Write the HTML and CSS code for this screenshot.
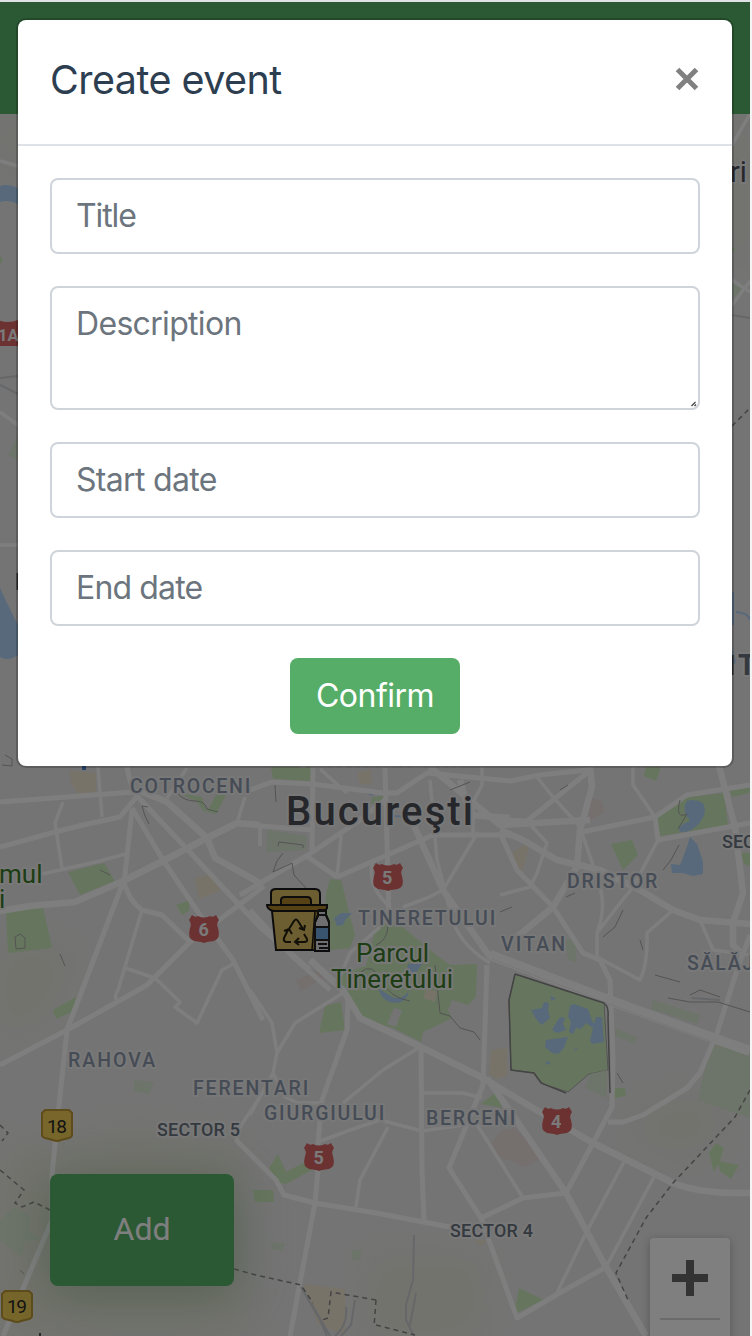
FILE: index.html
```html
<!DOCTYPE html>
<html lang="en">
<head>
<meta charset="utf-8">
<title>Create event</title>
<link rel="stylesheet" href="styles.css">
</head>
<body>
<div class="app">
  <header class="topbar"></header>
  <main class="map">
    <svg class="map-canvas" viewBox="0 114 750 1222" width="750" height="1222" aria-label="Map of Bucureşti">
      <defs>
        <filter id="soft" x="-30%" y="-30%" width="160%" height="160%"><feGaussianBlur stdDeviation="16"/></filter>
        <path id="shield" d="M-12-14 Q-9-11-6-13 Q0-10 6-13 Q9-11 12-14 L15-9 Q12-5 14-1 Q17 10 10 12 L3 13 L0 14 L-3 13 L-10 12 Q-17 10-14-1 Q-12-5-15-9Z"/>
        <path id="badge" d="M-12-15 H12 L15-12 V10 Q15 12 12 13 L4 15 Q0 17-4 15 L-12 13 Q-15 12-15 10 V-12Z"/>
      </defs>
      <rect class="land" y="114" width="750" height="1222"/>
      <g class="tint" filter="url(#soft)">
        <path d="M0 114H20V170H0zM730 114H750V260H730zM0 950H70L50 1010L0 1040zM0 1150H60L130 1130L240 1150L250 1336H0zM370 1260H480V1336H370zM640 1110L710 1100L720 1140L650 1150z"/>
      </g>
      <g class="park">
        <path d="M271 767H312V781L273 779zM68 872L104 863L115 881L80 895zM6 912L43 907L52 948L8 953zM176 905L190 900L189 911L182 915zM53 1010L78 996L74 1011L56 1019zM178 793L202 797L207 812L216 795L226 795L216 814L204 811L196 801z"/>
        <path d="M330 879L341 880L355 935L350 948L323 951L326 893zM372 797L384 796L382 805L371 804z"/>
        <path fill-rule="evenodd" d="M375 930L386 921L400 925L440 958L450 965L477 964L476 997L468 1005L452 1000L448 1010L452 1018L440 1024L423 1032L421 1042L393 1028L355 1017L337 980L343 973L366 966zM394 1008L402 1010L396 1027L387 1024z"/>
        <path d="M325 1006L341 1002L345 1030L319 1033z"/>
        <path class="edge" d="M515 974L604 1003L608 1070L589 1074L568 1092L543 1084L534 1073L511 1070L509 1000z"/>
        <path d="M656 817L687 797L724 793L728 825L660 836zM730 791L750 787V793L732 797zM611 844L632 840L638 855L623 870zM646 767H661L656 781L644 776zM741 853H750V866L744 864z"/>
        <path d="M514 1314L519 1288L544 1300zM709 1153L716 1143L724 1148L719 1163L714 1172zM718 1161L739 1165L731 1179L720 1171zM615 1088H625L626 1096L614 1098zM481 1104L496 1092L502 1108z"/>
        <path d="M269 1168L278 1154L286 1172L309 1160L312 1170L286 1184L275 1182zM253 1190H273L274 1202L255 1202z"/>
        <path d="M0 256L3 260L0 264zM731 246L736 250L731 252z"/>
      </g>
      <g class="park pale">
        <path d="M715 1040L750 1052V1118L698 1100L705 1068zM590 1074L607 1070V1098L585 1088zM0 1220L14 1207L30 1215L29 1230L42 1240L25 1241L22 1258L0 1240zM134 1080L154 1082L149 1094L134 1091zM565 940L576 938L576 962L568 960zM352 1250H361V1260H352zM272 1242L286 1244L281 1251L271 1249zM268 830L306 836L306 850L266 852z"/>
        <path d="M734 282L748 286L732 298zM8 455L18 435V460zM653 1000L700 1015L697 1024L651 1009zM615 1028L637 1037L635 1044L615 1036z"/>
      </g>
      <g class="built">
        <path d="M70 770L96 773V792L78 794L71 783zM195 878L212 874L220 891L199 899zM357 773L371 769L372 785L360 784zM513 852L531 841L522 872L511 865zM491 1050L507 1048V1075L498 1079L489 1075zM426 990L437 991L435 1002L423 998z"/>
        <path d="M473 1241L487 1240L481 1246zM303 1284L345 1289V1336L318 1324z"/>
      </g>
      <g class="rose"><path d="M592 798L602 802L604 812L587 822zM502 1130L514 1128L535 1146L539 1160L525 1167L509 1160L494 1155L492 1142zM296 980L320 970L324 977L301 991z"/></g>

      <g class="water">
        <path d="M687 801Q694 798 703 803Q708 813 700 822Q693 832 681 832Q676 830 683 824L690 821Q681 810 687 801zM690 837L697 844L703 862V874L693 876L683 873H672L671 864L680 865Q687 848 690 837z"/>
        <path d="M531 1010L542 1008L544 1002L549 1003L548 1010L550 1018L542 1025L536 1019zM570 1006L574 1004L588 1009L591 1018L594 1024L596 1017L602 1017L604 1042L592 1044L590 1040L593 1028L586 1023L581 1029L576 1028L573 1034L569 1032L571 1022L568 1016zM552 1030L560 1017L565 1018L563 1024L566 1030L557 1033zM546 1040L568 1037L564 1048L558 1054L552 1053L545 1047zM550 996L556 998L552 1001zM574 1049L578 1048L575 1051z"/>
        <path d="M408 964L423 963L415 974L406 978zM378 988L392 997Q403 1001 410 989L407 981Q413 995 401 1002Q384 1006 378 988zM334 918L341 913L352 913L346 919L343 925L337 926zM546 1061L551 1063L546 1065z"/>
        <path d="M0 186Q8 183 18 188V204Q9 199 0 202zM0 588Q10 610 18 625V655Q8 662 0 657zM732 592H734V625H732zM732 648L736 662L732 667z"/>
      </g>
      <path class="canal" d="M393 816L411 817M366 792L373 795M500 955L512 961M736 612Q749 613 750 620"/>

      <g class="road thin">
        <path d="M63 802L55 823L62 868M42 874L100 861L125 854M142 910L118 990Q113 998 118 1001M125 968L155 978L180 1002L175 1007L197 1023L222 970L235 963M98 767L102 817M245 797L237 823M167 798L187 768M260 828L260 846"/>
        <path d="M308 857L337 877L341 837L339 832M373 860Q366 885 388 905M430 780L437 860L450 910Q456 943 490 963M478 832L443 890L427 898L403 907M473 802V835M380 927L350 953L340 977M320 769L347 793M527 821L547 843L537 873L530 887L500 895M655 817L633 785V767M473 802L482 785V767"/>
        <path d="M537 777L553 797L580 827L597 877Q608 905 597 933V957M658 840L633 887L617 907L597 933M673 910L647 933Q648 964 640 980L597 957M700 920L713 950L750 955M420 1047L383 1070L343 1103M422 1093H463L482 1098M250 990L272 1023L277 1053L273 1073L250 1115M273 1073L285 1097L298 1103H320M343 993L295 1023L277 1053M318 1142L350 1130L380 1120L422 1131L477 1123M388 1127L360 1180L356 1207"/>
        <path d="M476 1123L523 1198M624 1162L586 1233L556 1295M654 1177L606 1267M260 1097L240 1127L236 1141M0 161L18 166M0 325L18 333M0 412L18 425M732 145L750 114M732 280L750 292M732 305L750 281M0 545H18"/>
      </g>
      <g class="road">
        <path d="M0 802L133 792M0 847L55 832L83 825L120 817L138 795M132 810L124 883Q130 902 142 910L162 915L190 942L170 962M122 885L67 1030L58 1115L52 1175V1220L3 1336M0 1065L67 1030L117 1002L147 985L190 942L264 886M127 767Q131 790 138 797L260 927L310 970M132 808L163 860L200 915L233 960L263 1020"/>
        <path d="M250 790L272 782L312 784L383 793H397L427 773L510 781L540 775L587 770M260 826L313 830M313 767L312 850M385 767L387 843L389 918M240 895L308 855L357 822L385 800M337 877L433 835L510 835L523 840L557 860L600 870L640 890M308 857L337 877M250 910L293 957L330 990"/>
        <path d="M500 820L527 821L588 772M582 832L655 817L687 795L750 785M658 840L750 823M655 817L658 840M500 833L517 870L553 907L583 953L600 960L610 980L613 1060L612 1107L593 1143L566 1193L523 1198L481 1218L449 1168L483 1085L487 965"/>
        <path d="M750 935L737 970L717 1033L700 1073L687 1088L643 1115L623 1122H608M348 997L347 1030L322 1100L318 1143L318 1170L315 1203L290 1336M421 1045L422 1170L424 1220M236 1140L276 1180L284 1195L315 1203L376 1213L450 1227M481 1218L517 1318L556 1295L606 1267"/>
      </g>
      <g class="road wide">
        <path d="M0 911L30 906L75 902L123 881L163 861L207 838L237 823L260 825M138 790L167 802L207 838L215 858L260 883M410 817L443 890L490 957M590 767L592 787L580 830L577 867L553 907L517 937M500 830L523 840L557 860L600 870L640 890L673 910L700 920L750 924M718 762L735 827L743 893L733 923V945L740 952"/>
        <path d="M310 960L343 990L360 1018L417 1045L483 1078L533 1108L593 1143L673 1183Q700 1194 751 1193M487 1078L523 1130L566 1193L606 1267L646 1336M430 767L500 825L590 820M460 780L470 815L510 818"/>
      </g>
      <path class="road major" d="M490 955L603 998L713 1038L750 1051"/>
      <path class="road-line" d="M492 959L604 1002L712 1042"/>

      <g class="contour">
        <path d="M178 794Q185 801 195 801T207 809L218 812M142 806L145 816L149 824M142 806L148 807M275 785L276 802M278 846L279 842L303 845V848M283 853L277 861L273 872L292 863L294 875L306 888M680 800Q675 820 687 814L678 829M679 845L671 860L663 870M512 907L500 912M603 937L615 927L623 910M566 897L575 893M388 925Q388 940 376 945M361 972Q372 962 381 980T410 1001M435 965L440 1013L450 1016L460 1028L474 1032L480 1040M617 1073L623 1083M5 755L12 759V766L2 765"/>
        <path d="M20 1270L24 1274M100 870L110 875M60 954L65 966M450 790L470 782M560 790L568 785M640 940L643 950M655 975L680 982M690 995L700 990L720 997M668 998L690 1002L718 1002L750 1012M15 937L20 934L25 938V948L16 949z"/>
        <path class="fence" d="M515 974L604 1003Q609 1007 608 1017L610 1093M515 974L509 1000L511 1070L534 1073L541 1083L566 1093"/>
      </g>
      <path class="rail" d="M301 1287L320 1320L327 1336M311 1303L330 1336M346 1307Q348 1325 335 1336M355 1300L351 1325L341 1336M414 1235L413 1280L406 1305V1320L414 1336M416 1293L410 1325M0 378L18 376M732 315L750 318M0 385L18 394M692 998L720 1000"/>
      <path class="border" d="M0 1170L24 1190L15 1203L22 1207L34 1202L50 1210M234 1269L256 1275L301 1285L313 1303M376 1300L331 1292L328 1318L322 1320M376 1300L374 1327M376 1325L415 1335M750 1090L735 1117L673 1183L646 1218L616 1273L628 1300M732 426L750 408M0 1125L8 1133L2 1141"/>

      <g class="roadsign red">
        <use href="#shield" x="388" y="877"/><use href="#shield" x="204" y="929"/><use href="#shield" x="319" y="1157"/><use href="#shield" x="557" y="1121"/>
        <path d="M-2 320Q8 324 18 320V346H-2z"/>
      </g>
      <g class="roadsign yellow"><use href="#badge" x="57" y="1125"/><use href="#badge" x="17" y="1306"/></g>
      <g class="sign-text"><text x="382" y="884">5</text><text x="198.500" y="936">6</text><text x="313.500" y="1164">5</text><text x="551" y="1128">4</text><text x="-2" y="341" class="sign-small">1A</text></g>
      <g class="badge-text"><text x="47" y="1133" textLength="20">18</text><text x="7" y="1313" textLength="20">19</text></g>

      <g class="label area">
        <text x="130" y="793" textLength="122">COTROCENI</text><text x="296" y="766" textLength="166">CENTRUL VECHI</text>
        <text x="358" y="925" textLength="139">TINERETULUI</text><text x="501" y="951" textLength="66">VITAN</text>
        <text x="567" y="888" textLength="92">DRISTOR</text><text x="687" y="970">SĂLĂJAN</text>
        <text x="68" y="1067" textLength="89">RAHOVA</text><text x="193" y="1095" textLength="117">FERENTARI</text>
        <text x="264" y="1120" textLength="122">GIURGIULUI</text><text x="426" y="1125" textLength="91">BERCENI</text>
      </g>
      <g class="label sector">
        <text x="157" y="1136" textLength="83">SECTOR 5</text><text x="450" y="1237" textLength="83">SECTOR 4</text><text x="722" y="848">SECTOR 3</text>
      </g>
      <g class="label green">
        <text x="-1" y="883">mul</text><text x="-1" y="908">i</text>
        <text x="356" y="962" textLength="73">Parcul</text><text x="331" y="988" textLength="122">Tineretului</text>
      </g>
      <text class="label city" x="286" y="825" textLength="187">Bucureşti</text>
      <text class="label town" x="730" y="182">ri</text>
      <text class="label bold" x="738" y="675">T</text>
      <path class="tick" d="M732.500 655V675M17.500 573V590M40 1333V1336"/><path class="pin" d="M84 765V770"/>

      <g class="bin" transform="translate(266 888)">
        <path class="lid" d="M5 17V5Q5 1 10 1H49Q54 1 54 6V17z"/>
        <path class="lid dark" d="M15 17V12Q15 9 19 9H41Q45 9 45 13V17z"/>
        <path class="lid dark" d="M1 17H61V20Q60 23 55 23H7Q1 21 1 17z"/>
        <path class="lid" d="M6 23H53L49 62H10z"/>
        <path class="side" d="M49 23H54L51 62H46z"/>
        <path class="arrows" d="M23 41L28 33Q30 30 32 33L37 41M33 40L38 42L39 37M38 46L41 51Q42 54 38 54H30M33 50L29 54L33 57M25 54H20Q17 53 18 50L22 42M18 43L23 41L26 46"/>
        <path class="bottle" d="M52 23H60V27L63 34V63H49V34L52 28z"/>
        <path class="bottle-label" d="M49 39H63V52H49z"/>
        <path class="outline" d="M52 22H60M52 27H60L63 34V62M52 27L49 34V62M49 39H63M49 52H63M52 56H61M53 60H63"/>
      </g>
    </svg>
    <button class="add">Add</button>
    <div class="zoom">
      <button class="zoom-in" aria-label="Zoom in"></button>
      <hr class="zoom-rule">
    </div>
  </main>
  <div class="backdrop"></div>
  <section class="modal" role="dialog">
    <div class="modal-header">
      <h5 class="modal-title">Create event</h5>
      <svg class="close" viewBox="0 0 24 24" width="24" height="24" role="button" aria-label="Close"><path d="M2.500 2.500L21.500 21.500M21.500 2.500L2.500 21.500"/></svg>
    </div>
    <form class="modal-body">
      <input class="field title-field" placeholder="Title">
      <div class="area-wrap">
        <textarea class="field tall" placeholder="Description"></textarea>
        <svg class="grip" viewBox="0 0 8 8" width="8" height="8"><path d="M1.500 6L5.500 2M4.500 6L6 4.500"/></svg>
      </div>
      <input class="field start-field" placeholder="Start date">
      <input class="field end-field" placeholder="End date">
      <button class="confirm" type="button">Confirm</button>
    </form>
  </section>
</div>
</body>
</html>
```
FILE: styles.css
```css
* { box-sizing: border-box; }
body { margin: 0; background: #f4f4f5; font-family: Inter, "Liberation Sans", sans-serif; }
.app { position: relative; display: flex; flex-direction: column; width: 750px; height: 1336px; overflow: hidden; border-top: 2px solid #dfe1e4; }
.topbar { flex: none; height: 112px; background: #56b268; }
.map { position: relative; flex: 1; overflow: hidden; }
.map-canvas { display: block; }
.land { fill: #e8e8e8; }
.tint { fill: #e5e6d8; }
.park { fill: #cdebbb; }
.park .edge { stroke: #aaa; stroke-width: 1; }
.pale { fill: #dae8d3; }
.built { fill: #efe6d2; }
.rose { fill: #ebdedb; }
.water { fill: #aed3f6; }
.canal { fill: none; stroke: #aed3f6; stroke-width: 2; }
.road { fill: none; stroke: #fdfdfd; stroke-width: 5; stroke-linejoin: round; }
.thin { stroke-width: 3.500; }
.wide { stroke-width: 6.500; }
.major { stroke-width: 10; }
.road-line { fill: none; stroke: #eee; stroke-width: 1; }
.contour { fill: none; stroke: #a8a8a8; stroke-width: 1; }
.contour .fence { stroke: #888; stroke-width: 1.500; }
.rail { fill: none; stroke: #ccced3; stroke-width: 2; }
.border { fill: none; stroke: #888; stroke-width: 1.500; stroke-dasharray: 5 4; }
.red { fill: #d86464; }
.yellow { fill: #f0cd55; stroke: #bd9838; stroke-width: 2; }
.sign-text { font: 700 18px Roboto, sans-serif; fill: #f4f4f4; }
.sign-small { font-size: 16.500px; }
.badge-text { font: 400 19px Roboto, sans-serif; fill: #282828; }
.label { font-family: Roboto, sans-serif; paint-order: stroke; stroke: #f0f0f0; stroke-width: 4px; stroke-linejoin: round; }
.area { font-size: 19.500px; font-weight: 500; fill: #8c98ad; letter-spacing: 1.800px; }
.sector { font-size: 18px; font-weight: 500; fill: #69737f; }
.green { font-size: 26px; fill: #3b7a2b; }
.city { font-size: 40px; font-weight: 500; fill: #4d4f57; }
.town { font-size: 29px; fill: #4d4f57; }
.bold { font-size: 29px; font-weight: 700; fill: #69737f; }
.tick { stroke: #555; stroke-width: 2; }
.pin { stroke: #4d84ce; stroke-width: 4; }
.lid { fill: #d9bd60; stroke: #181818; stroke-width: 2; }
.lid.dark { fill: #ad8428; }
.side { fill: #b18a31; stroke: #181818; stroke-width: 1.500; }
.arrows { fill: none; stroke: #252010; stroke-width: 2; }
.bottle { fill: #dedee5; stroke: #181818; stroke-width: 2; }
.bottle-label { fill: #72a9dd; }
.outline { fill: none; stroke: #202020; stroke-width: 2; }
.add { position: absolute; left: 50px; top: 1060px; width: 184px; height: 112px; padding: 0 0 3px; border: 0; border-radius: 8px; background: #56b268; color: #fff; font: 400 32px Roboto, sans-serif; box-shadow: 0 8px 50px rgba(96,150,110,.45); }
.zoom { position: absolute; left: 650px; top: 1124px; width: 80px; height: 162px; border-radius: 4px; background: #fff; box-shadow: 0 2px 8px rgba(0,0,0,.25); }
.zoom-in { display: block; width: 36px; height: 36px; margin: 22px; padding: 0; border: 0; background: linear-gradient(#666,#666) center / 36px 8px no-repeat, linear-gradient(#666,#666) center / 8px 36px no-repeat; }
.zoom-rule { width: 60px; height: 2px; margin: 0 10px; border: 0; background: #d6d6d6; }
.backdrop { position: absolute; inset: 0; background: rgba(0,0,0,.5); }
.modal { position: absolute; left: 18px; top: 18px; width: 714px; height: 746px; border-radius: 8px; background: #fff; box-shadow: 0 0 0 2px rgba(0,0,0,.2); overflow: hidden; }
.modal-header { display: flex; justify-content: space-between; align-items: center; height: 126px; padding: 0 33px 6px 32px; border-bottom: 2px solid #dee2e6; }
.modal-title { margin: 0; padding-top: 2px; color: #2c3e50; font-size: 39.500px; line-height: 60px; font-weight: 400; letter-spacing: -.550px; }
.close path { fill: none; stroke: #808080; stroke-width: 5; }
.modal-body { display: flex; flex-direction: column; gap: 32px; padding: 32px; }
.field { display: block; width: 650px; height: 76px; padding: 0 24px 2px; border: 2px solid #ced4da; border-radius: 8px; outline: none; background: #fff; font: 400 32px/48px Inter, "Liberation Sans", sans-serif; letter-spacing: -.680px; }
.field::placeholder { color: #6c757d; opacity: 1; }
.title-field { letter-spacing: -1.100px; }
.end-field { letter-spacing: -.850px; }
.tall { height: 124px; padding-top: 12px; resize: none; }
.area-wrap { position: relative; height: 124px; }
.grip { position: absolute; right: 2px; bottom: 2px; }
.grip path { stroke: #444; stroke-width: 1.300; }
.confirm { align-self: center; width: 170px; height: 76px; padding: 0 0 2px; border: 0; border-radius: 8px; background: #56ad68; color: #fff; font: 400 32px Inter, "Liberation Sans", sans-serif; letter-spacing: -.500px; }
```
